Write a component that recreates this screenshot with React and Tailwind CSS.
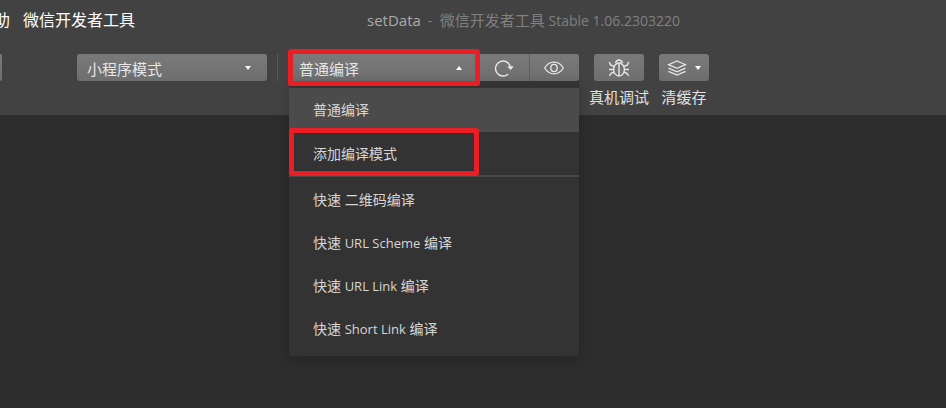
import React from "react";

const quickItems = [
  { latin: "URL Scheme", key: "scheme" },
  { latin: "URL Link", key: "link" },
  { latin: "Short Link", key: "short" },
];

const control =
  "h-[27px] bg-linear-to-b from-[#7a7a7a] to-[#6e6e6e] text-[#e6e6e6]";

function RefreshIcon() {
  return (
    <svg width="20" height="18" viewBox="0 0 20 18" fill="none" stroke="currentColor" strokeWidth="1.4">
      <path d="M14.2 15A7.500 7.500 0 1 1 16.400 8" />
      <path d="M14 7.800l2.700 2.800L19 7.600z" fill="currentColor" strokeWidth="0.8" />
    </svg>
  );
}

function EyeIcon() {
  return (
    <svg width="20" height="14" viewBox="0 0 20 14" fill="none" stroke="currentColor" strokeWidth="1.3">
      <path d="M0.700 7C3 3 6.200 1.200 10 1.200s7 1.800 9.300 5.800C17 11 13.800 12.800 10 12.800S3 11 0.700 7z" />
      <ellipse cx="10" cy="7" rx="3.200" ry="3.600" />
    </svg>
  );
}

function BugIcon() {
  return (
    <svg width="22" height="18" viewBox="0 0 22 18" fill="none" stroke="currentColor" strokeWidth="1.400">
      <path d="M7.500 4.200C8 2.200 9 1 11 1s3 1.200 3.500 3.200" />
      <ellipse cx="11" cy="10.500" rx="5.400" ry="6.500" />
      <path d="M11 4V17" />
      <path d="M6.200 7.500L2.500 6 1.300 3M15.800 7.500L19.500 6 20.700 3M5.600 10.500H1M16.400 10.500H21M6.200 13L2.800 14.500 1.500 17M15.800 13L19.200 14.500 20.500 17" />
    </svg>
  );
}

function LayersIcon() {
  return (
    <svg width="20" height="16" viewBox="0 0 20 16" fill="none" stroke="currentColor" strokeWidth="1.300">
      <path d="M10 1l8.500 3.700L10 8.400 1.500 4.700zM1.500 8.200L10 11.900l8.500-3.700M1.500 11.300L10 15l8.500-3.700" />
    </svg>
  );
}

function Caret({ up = false }) {
  return (
    <svg width="6" height="4" viewBox="0 0 6 4" fill="#fff" aria-hidden="true">
      <path d={up ? "M0 4L3 0 6 4z" : "M0 0L3 4 6 0z"} />
    </svg>
  );
}

function MenuItem({ children, className }) {
  return (
    <button role="menuitem" className={`block w-full pl-6 text-left ${className}`}>
      {children}
    </button>
  );
}

function Highlight({ className }) {
  return (
    <div
      aria-hidden="true"
      className={`pointer-events-none absolute rounded-[3px] border-5 border-[#ea1f25] ${className}`}
    />
  );
}

export default function App() {
  return (
    <div className="min-h-screen overflow-hidden bg-[#2d2d2d] font-['Open_Sans','Noto_Sans_CJK_SC',sans-serif] text-[15px] text-[#e0e0e0]">
      <header className="h-[115px] bg-[#424242]">
        <div className="grid grid-cols-[367px_1fr] items-center pt-2 leading-6">
          <nav className="-ml-[6px] flex gap-[13px] pb-px text-base leading-6 text-white">
            <a href="#help">助</a>
            <a href="#devtools">微信开发者工具</a>
          </nav>
          <h1 className="flex gap-[7px] whitespace-nowrap text-[#808080]">
            <span className="text-[#ababab]">setData</span>
            <span>-</span>
            <span>
              微信开发者工具 <span className="text-[14px]">Stable 1.06.2303220</span>
            </span>
          </h1>
        </div>

        <div className="flex items-start pt-[21px]">
          <button aria-label="上一项" className={`${control} w-[2px] rounded-r-[3px]`} />
          <label className="relative ml-[75px] block w-[190px]">
            <select
              aria-label="模式"
              className={`${control} w-full appearance-none rounded-[3px] pt-[2px] pl-[10px] leading-6`}
            >
              <option>小程序模式</option>
            </select>
            <span className="pointer-events-none absolute inset-y-0 right-4 flex items-center">
              <Caret />
            </span>
          </label>
          <div className="ml-[10px] h-[27px] w-px bg-[#565a58]" />

          <div className="relative ml-[11px] flex w-[290px]">
            <button
              aria-haspopup="menu"
              aria-expanded="true"
              className={`${control} flex w-[190px] items-center justify-between rounded-l-[3px] pr-[17px] pl-[10px]`}
            >
              <span className="pt-1">普通编译</span>
              <Caret up />
            </button>
            <button aria-label="编译" className={`${control} flex flex-1 items-center justify-center border-r border-[#5f5f5f]`}>
              <RefreshIcon />
            </button>
            <button aria-label="预览" className={`${control} flex flex-1 items-center justify-center rounded-r-[3px]`}>
              <EyeIcon />
            </button>

            <div
              role="menu"
              className="absolute top-[27px] left-0 w-full rounded-b-[3px] bg-[#333] pt-[7px] pb-[6px] text-[14px] text-[#d6d6d6] shadow-[0_4px_14px_rgba(0,0,0,0.2)]"
            >
              <MenuItem className="h-11 bg-[#4b4b4b] pb-[2px]">普通编译</MenuItem>
              <div className="border-b-2 border-[#484848]">
                <MenuItem className="h-[43px]">添加编译模式</MenuItem>
              </div>
              <MenuItem className="h-11">快速 二维码编译</MenuItem>
              {quickItems.map(({ key, latin }) => (
                <MenuItem key={key} className="h-[43px]">
                  快速 <span className="text-[13px]">{latin}</span> 编译
                </MenuItem>
              ))}
            </div>

            <Highlight className="-top-[5px] -left-px h-[37px] w-[192px]" />
            <Highlight className="top-[74px] left-0 h-12 w-[190px]" />
          </div>

          <div className="ml-[10px] flex w-[60px] flex-col items-center gap-1">
            <button aria-labelledby="debug-label" className={`${control} flex w-[50px] items-center justify-center rounded-[3px]`}>
              <BugIcon />
            </button>
            <span id="debug-label" className="leading-6">真机调试</span>
          </div>
          <div className="ml-[10px] flex w-[50px] flex-col items-center gap-1">
            <button aria-labelledby="cache-label" className={`${control} flex w-full items-center justify-center gap-2 rounded-[3px]`}>
              <LayersIcon />
              <Caret />
            </button>
            <span id="cache-label" className="leading-6">清缓存</span>
          </div>
        </div>
      </header>
    </div>
  );
}
